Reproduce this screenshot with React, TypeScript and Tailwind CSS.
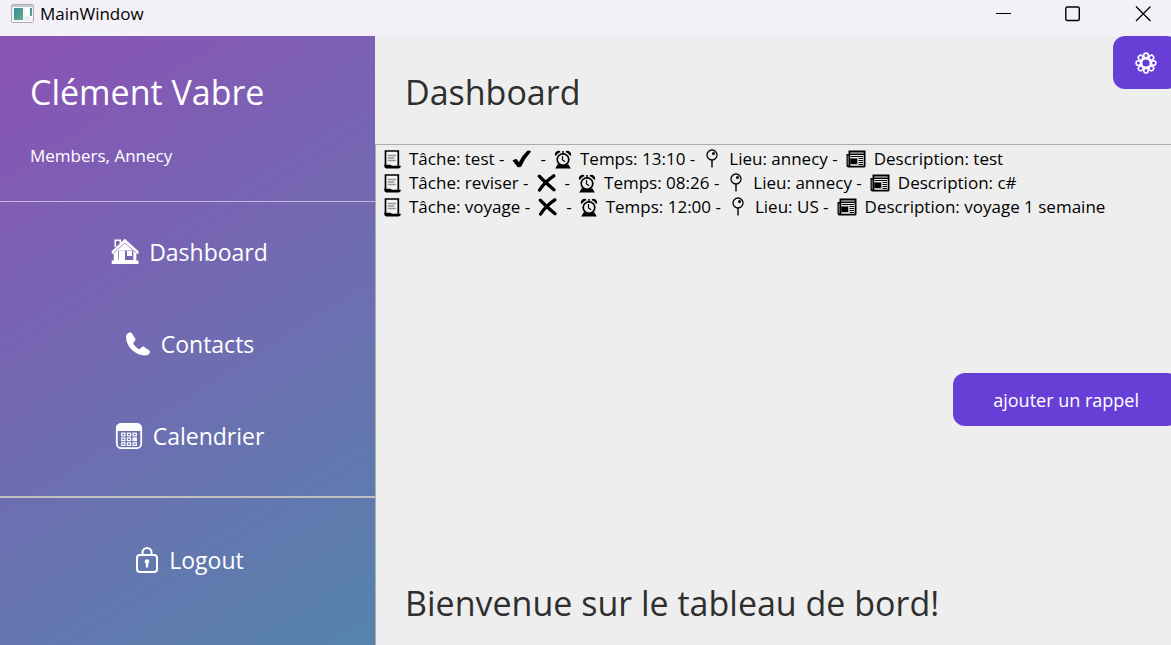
import type { ReactNode } from "react";

type IconProps = { className?: string };

function WindowIcon() {
  return (
    <svg width="24" height="20" viewBox="0 0 24 20" aria-hidden="true">
      <defs>
        <linearGradient id="pane" x1="0" y1="0" x2="1" y2="1">
          <stop offset="0" stopColor="#3f86a8" />
          <stop offset="1" stopColor="#5fb083" />
        </linearGradient>
      </defs>
      <rect x="0.5" y="0.5" width="22" height="18" rx="1" fill="#f3f5f6" stroke="#a9adb8" />
      <rect x="1" y="1" width="21" height="2" fill="#c3cad3" />
      <rect x="3" y="4" width="9" height="12" fill="url(#pane)" />
      <rect x="14" y="4" width="4" height="7" fill="#fff" />
      <rect x="14" y="13" width="4" height="3" fill="#e4e8e6" />
      <rect x="19" y="4" width="2" height="8" fill="url(#pane)" />
    </svg>
  );
}

function GearIcon() {
  const petals = [0, 45, 90, 135, 180, 225, 270, 315];
  return (
    <svg width="22" height="22" viewBox="-11 -11 22 22" fill="none" stroke="#fff" strokeWidth="1.6" aria-hidden="true">
      {petals.map((angle) => (
        <circle key={angle} cx="0" cy="-7.6" r="2.3" transform={`rotate(${angle})`} />
      ))}
      <circle r="4.6" strokeWidth="2" />
    </svg>
  );
}

function HouseIcon() {
  return (
    <svg width="28" height="28" viewBox="0 0 28 28" aria-hidden="true">
      <path d="M4.300 9V2.200h5V5" fill="none" stroke="#fff" strokeWidth="1.600" />
      <path
        fill="#fff"
        fillRule="evenodd"
        d="M13.800.8 27.500 13.200v2.600h-2.200v6.700h2.200V26H.7v-3.500h2v-6.700h-2v-2.600zM7.300 12.500V22h15v-9.500z"
      />
      <path d="M2.500 15 13.900 5 25.500 15" fill="none" stroke="#7861b2" strokeWidth=".7" />
      <path fill="#fff" d="M8 12.400h6V22H8zM16 13h5v5h-5z" />
    </svg>
  );
}

function PhoneIcon() {
  return (
    <svg width="26" height="26" viewBox="0 0 26 26" fill="#fff" aria-hidden="true">
      <path d="M1 5.6C1 3.4 3.2 1.4 5.2 1.4c1 0 1.5.6 2 1.4l2.9 4.7c.6 1 .4 1.9-.3 2.7L8 12c1.4 2.8 3.6 5 6.6 6.3l2-2c.8-.8 1.7-.9 2.600-.3l4.800 3.200c1.200.8 1.200 1.800.6 2.900-1 1.900-2.800 2.600-4.900 2.500C9.500 24 1 15.500 1 5.600z" />
    </svg>
  );
}

function CalendarIcon() {
  const cells = [0, 1, 2].flatMap((row) => [0, 1, 2].map((col) => ({ row, col })));
  return (
    <svg width="28" height="28" viewBox="0 0 28 28" fill="none" stroke="#fff" aria-hidden="true">
      <rect x="1.8" y="1.800" width="24.400" height="24.400" rx="4.500" strokeWidth="1.800" />
      <path d="M1.500 8.500V6A4.500 4.500 0 0 1 6 1.500h16A4.500 4.500 0 0 1 26.500 6v2.500z" fill="#fff" />
      {cells.map(({ row, col }) => (
        <rect
          key={`${row}-${col}`}
          x={6.7 + col * 5.7}
          y={11.2 + row * 4.8}
          width="3.200"
          height="2.600"
          strokeWidth="1.200"
          fill={row === 1 && col === 2 ? "#fff" : "none"}
        />
      ))}
    </svg>
  );
}

function LockIcon() {
  return (
    <svg width="24" height="28" viewBox="0 0 24 28" fill="none" stroke="#fff" strokeWidth="2" aria-hidden="true">
      <rect x="2" y="9" width="20" height="17" rx="3" />
      <path d="M7.500 9V6.500a4.500 4.500 0 0 1 9 0V9" />
      <circle cx="12" cy="15.500" r="2.300" fill="#fff" stroke="none" />
      <path d="M12 16v5.500" strokeWidth="2.400" />
    </svg>
  );
}

function PageIcon({ className }: IconProps) {
  return (
    <svg className={className} width="17" height="19" viewBox="0 0 17 19" aria-hidden="true">
      <path d="M1.500 16V1h12.800v15" fill="#f3f3f3" stroke="#000" strokeWidth="1.700" />
      <path d="M3.800 5.500h8M3.800 8h6.500M3.800 10.500h8" stroke="#999" strokeWidth="1.400" />
      <path d="M.2 14.800h6.600l.8 1H17q-.3 2.600-2.300 2.600H2.300Q0 18.200.2 14.800z" fill="#000" />
    </svg>
  );
}

function CheckIcon({ className }: IconProps) {
  return (
    <svg className={className} width="20" height="18" viewBox="0 0 20 18" aria-hidden="true">
      <path d="M.5 10.500 3.600 9q1-.3 1.500.6L6.800 12.200Q10.500 5 15.300.8q.6-.5 1.300-.4L18.500 1q.6.3.2.900Q13 8 9.500 16q-.3.800-1 .9l-2.300.4q-.6.100-.9-.5z" fill="#000" />
    </svg>
  );
}

function CrossIcon({ className }: IconProps) {
  return (
    <svg className={className} width="20" height="18" viewBox="0 0 20 18" aria-hidden="true">
      <path d="M2.300 2.200Q6 6.500 17 15.800M16.800 1.800Q7.500 8 2.600 16" fill="none" stroke="#000" strokeWidth="3.300" strokeLinecap="round" />
    </svg>
  );
}

function ClockIcon({ className }: IconProps) {
  return (
    <svg className={className} width="18" height="19" viewBox="0 0 18 19" aria-hidden="true">
      <path d="M.8 5.400Q.5 1 5.500.8L6.500 2Q3.500 3 2 5.800zM17.200 5.400Q17.500 1 12.500.8L11.500 2q3 1 4.500 3.800z" fill="#000" />
      <path d="M9 1v3M4.500 14.500 2.500 17.800h13l-2-3.300" fill="#000" stroke="#000" strokeWidth="1.500" />
      <circle cx="9" cy="9.600" r="5.800" fill="#eee" stroke="#000" strokeWidth="1.700" />
      <path d="M8.500 6v4l2.600 1.800" fill="none" stroke="#000" strokeWidth="1.200" />
    </svg>
  );
}

function PinIcon({ className }: IconProps) {
  return (
    <svg className={className} width="14" height="20" viewBox="0 0 14 20" fill="none" stroke="#000" aria-hidden="true">
      <circle cx="7" cy="6" r="5" strokeWidth="1.300" />
      <path d="M7 11v7.500" strokeWidth="1.400" />
      <circle cx="8.500" cy="4.600" r="1.500" fill="#000" stroke="none" />
    </svg>
  );
}

function NewsIcon({ className }: IconProps) {
  return (
    <svg className={className} width="20" height="18" viewBox="0 0 20 18" aria-hidden="true">
      <path d="M2.500.5h17v15.500q0 1.500-1.500 1.500H2.500q-2 0-2-2V4h2z" fill="#000" />
      <path d="M4.300 2.400h13.400v1.200H4.300zM4.300 5h13.400v10.700H4.300z" fill="#eee" />
      <path d="M4.300 8.400h7v5.800h-7z" fill="#000" />
      <path d="M5 6.500h12M12.500 8.500h4.500M12.500 10.500h4.500M12.500 12.500h4.500M12.500 14.500h4.500" stroke="#000" />
      <path d="M2.200 5.500v10" stroke="#eee" strokeWidth=".6" />
    </svg>
  );
}

type Task = { name: string; done: boolean; time: string; place: string; description: string };

const tasks: Task[] = [
  { name: "test", done: true, time: "13:10", place: "annecy", description: "test" },
  { name: "reviser", done: false, time: "08:26", place: "annecy", description: "c#" },
  { name: "voyage", done: false, time: "12:00", place: "US", description: "voyage 1 semaine" },
];

function TaskRow({ task }: { task: Task }) {
  return (
    <li className="flex h-6 items-center whitespace-nowrap">
      <PageIcon className="mr-2 shrink-0" />
      <span>Tâche: {task.name} -</span>
      {task.done ? <CheckIcon className="mx-2 shrink-0" /> : <CrossIcon className="mx-2 shrink-0" />}
      <span>-</span>
      <ClockIcon className="mx-2 shrink-0" />
      <span>Temps: {task.time} -</span>
      <PinIcon className="mx-[10px] shrink-0" />
      <span>Lieu: {task.place} -</span>
      <NewsIcon className="mx-2 shrink-0" />
      <span>Description: {task.description}</span>
    </li>
  );
}

function NavButton({ icon, label }: { icon: ReactNode; label: string }) {
  return (
    <button type="button" className="flex h-[92px] w-full items-center justify-center gap-[10px] pl-1 text-[23px] text-white">
      {icon}
      <span>{label}</span>
    </button>
  );
}

export default function App() {
  return (
    <div className="flex min-h-screen flex-col overflow-hidden bg-[#eeeeee] font-['Open_Sans','Noto_Sans',sans-serif]">
      <header className="flex h-9 shrink-0 items-center justify-between bg-[#f4f0f8] pb-2 pl-[11px] text-black">
        <div className="flex items-center gap-[5px] text-[17px]">
          <WindowIcon />
          <span>MainWindow</span>
        </div>
        <div className="flex items-center gap-[54px] pr-5">
          <button type="button" aria-label="Réduire">
            <svg width="16" height="16" viewBox="0 0 16 16" stroke="#000">
              <path d="M1 7.500h15" />
            </svg>
          </button>
          <button type="button" aria-label="Agrandir">
            <svg width="16" height="16" viewBox="0 0 16 16" fill="none" stroke="#000" strokeWidth="1.400">
              <rect x=".8" y="1" width="13.500" height="13.500" rx="1.500" />
            </svg>
          </button>
          <button type="button" aria-label="Fermer">
            <svg width="16" height="16" viewBox="0 0 16 16" stroke="#000" strokeWidth="1.300">
              <path d="M1 .5l14.500 14.500M15.500.5L1 15" />
            </svg>
          </button>
        </div>
      </header>

      <div className="flex grow">
        <aside className="flex w-[375px] shrink-0 flex-col bg-[linear-gradient(148deg,#8b52b6,#5584ac)] text-white">
          <div className="flex h-[166px] flex-col border-b border-[#c3b5dc] px-[30px] pt-8">
            <h1 className="text-[34px] leading-[48px]">Clément Vabre</h1>
            <p className="mt-7 text-[17px] leading-6">Members, Annecy</p>
          </div>
          <nav className="border-b-2 border-[#c0c0c0] pt-1 pb-[14px]">
            <NavButton icon={<HouseIcon />} label="Dashboard" />
            <NavButton icon={<PhoneIcon />} label="Contacts" />
            <NavButton icon={<CalendarIcon />} label="Calendrier" />
          </nav>
          <div className="pt-4">
            <NavButton icon={<LockIcon />} label="Logout" />
          </div>
        </aside>

        <main className="flex min-w-0 grow flex-col">
          <div className="flex h-[108px] shrink-0 items-start justify-between pl-[30px]">
            <h2 className="pt-8 text-[34px] leading-[48px] text-[#2e2e2e]">Dashboard</h2>
            <button
              type="button"
              aria-label="Paramètres"
              className="-mr-2 flex h-[53px] w-[66px] items-center justify-center rounded-xl bg-[#673fd7]"
            >
              <GearIcon />
            </button>
          </div>
          <section className="flex grow flex-col border-t border-l border-[#abadb3]">
            <ul className="pt-[2px] pl-2 text-[17px] text-black">
              {tasks.map((task) => (
                <TaskRow key={task.name} task={task} />
              ))}
            </ul>
            <button
              type="button"
              className="mt-[154px] -mr-2 h-[53px] self-end rounded-xl bg-[#673fd7] px-10 pt-[2px] text-[18px] text-white"
            >
              ajouter un rappel
            </button>
            <p className="mt-auto pb-[18px] pl-[29px] text-[34px] leading-[48px] text-[#2e2e2e]">
              Bienvenue sur le tableau de bord!
            </p>
          </section>
        </main>
      </div>
    </div>
  );
}
